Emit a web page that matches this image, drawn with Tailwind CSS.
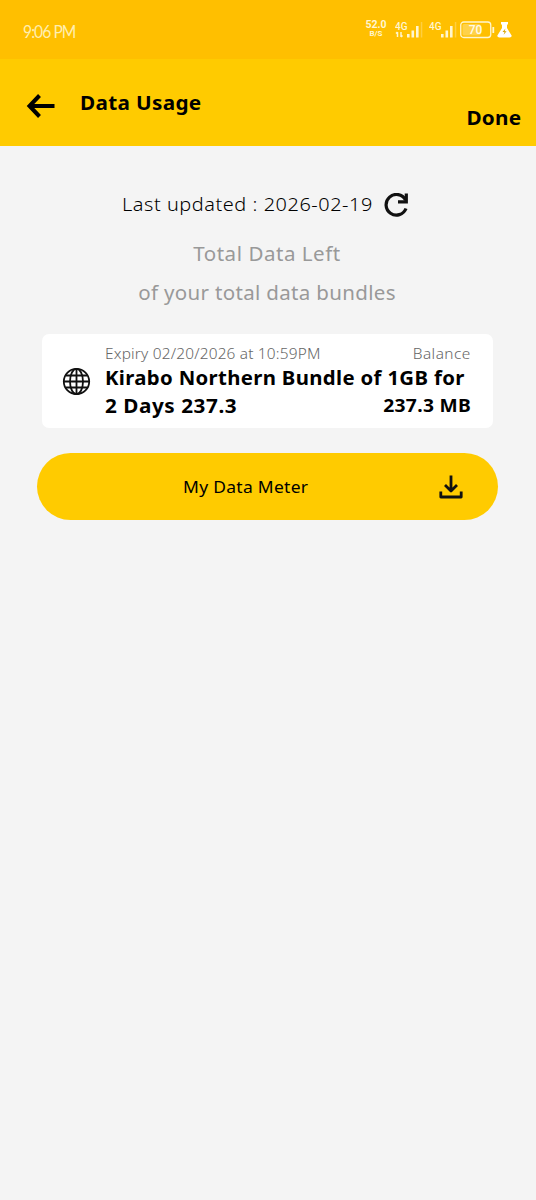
<!DOCTYPE html>
<html lang="en">
<head>
<meta charset="utf-8">
<title>Data Usage</title>
<script src="https://cdn.jsdelivr.net/npm/@tailwindcss/browser@4"></script>
</head>
<body class="w-[536px] h-[1200px] bg-[#f4f4f4] font-['Noto_Sans','Open_Sans',sans-serif] text-black whitespace-nowrap overflow-hidden">
<div class="h-[59px] bg-[#ffbf00] flex items-start justify-between pl-[23px] pr-[24px] text-[#fff6d0]">
  <div class="mt-[21px] leading-5 text-[18px] font-normal font-['Lato',sans-serif] tracking-[-1.1px] origin-left scale-x-[0.87] text-[#ffeeb0]">9:06 PM</div>
  <div class="flex items-start font-['Roboto',sans-serif] font-bold">
    <div class="mt-[19px] w-[22px] text-center mr-[8px]">
      <div class="text-[10.5px] leading-[11px]">52.0</div>
      <div class="text-[8px] leading-[7px]">B/S</div>
    </div>
    <svg class="mt-[20px] w-[30px] h-[19px] mr-[4px]" viewBox="0 0 30 19" fill="currentColor"><text x="0" y="9.500" font-size="10" font-weight="500">4G</text><path d="M2.500 12v5M1 13.500l1.500-1.500M6 12v5M6 17l1.500-1.500" fill="none" stroke="currentColor" stroke-width="1.500"/><path d="M12 14h2.600v3.500H12zM16.500 10.500h2.600v7h-2.600zM21 6h2.600v11.500H21z"/><path d="M25.800 2h1.500v15.500h-1.500z" opacity=".3"/></svg>
    <svg class="mt-[20px] w-[30px] h-[19px] mr-[1px]" viewBox="0 0 30 19" fill="currentColor"><text x="0" y="9.500" font-size="10" font-weight="500">4G</text><path d="M12 14h2.600v3.500H12zM16.500 10.500h2.600v7h-2.600zM21 6h2.600v11.500H21z"/><path d="M25.800 2h1.500v15.500h-1.500z" opacity=".3"/></svg>
    <svg class="mt-[21px] w-[35px] h-[18px] mr-[2px]" viewBox="0 0 35 18"><rect x=".75" y="1" width="30" height="15.500" rx="3" fill="none" stroke="currentColor" stroke-width="1.300"/><rect x="2.500" y="3" width="18" height="11.500" rx="1.500" fill="currentColor" opacity=".35"/><path d="M33.300 6v6" stroke="currentColor" stroke-width="1.800"/><text x="15.500" y="13" text-anchor="middle" font-size="12" font-weight="500" fill="#fffbe8">70</text></svg>
    <svg class="mt-[22px] w-[15px] h-[16px]" viewBox="0 0 15 16"><path d="M4 0h7v2.500h-1V6l4.600 7.500Q15 15.500 12.500 15.500h-10Q0 15.500 .4 13.500L5 6V2.500H4z" fill="white"/><path d="M8.500 6.500L5.500 10h2L6.600 12.700l3-3.500h-2z" fill="#d9a500"/></svg>
  </div>
</div>
<header class="h-[87px] bg-[#ffcb00] flex items-start text-[19px] leading-7 font-bold">
  <svg class="ml-[26px] mt-[35px] w-[29px] h-[24px]" viewBox="0 0 29 24" fill="none" stroke="black" stroke-width="4"><path d="M28.500 12H3M13.500 1.500L3.500 12l10 10.500"/></svg>
  <h1 class="ml-[25px] mt-[30px] tracking-[0.3px] origin-left scale-x-[1.09]">Data Usage</h1>
  <span class="ml-auto mr-[15px] mt-[45px] tracking-[0.2px] origin-right scale-x-[1.09]">Done</span>
</header>
<main class="flex flex-col pt-[44px]">
  <div class="flex items-center h-[28px] pl-[122px] text-[18px] font-light">
    <span class="tracking-[0.5px] w-[262px]"><span class="inline-block origin-left scale-x-[1.105]">Last updated : 2026-02-19</span></span>
    <svg class="mt-[2px] w-[25px] h-[24px]" viewBox="0 0 25 24" fill="none" stroke="#111" stroke-width="3.200"><path d="M22 15.500A10.300 10.300 0 1 1 21.500 7"/><path d="M22.300 .5v8.300H14"/></svg>
  </div>
  <div class="mt-[17px] pr-[2px] text-center text-[19px] leading-[39px] text-[#999]">
    <p class="tracking-[0.5px] scale-x-[1.08]">Total Data Left</p>
    <p class="tracking-[0.3px] scale-x-[1.08]">of your total data bundles</p>
  </div>
  <section class="ml-[42px] mt-[21px] w-[451px] h-[94px] bg-white rounded-[7px] flex pl-[20px] pr-[22px]">
    <svg class="mt-[33px] w-[29px] h-[29px] mr-[14px] shrink-0" viewBox="0 0 29 29" fill="none" stroke="#111" stroke-width="1.800"><circle cx="14.500" cy="14.500" r="12.700"/><ellipse cx="14.500" cy="14.500" rx="6.500" ry="12.700"/><path d="M14.500 2v25M2 14.500h25M4 8.500h21M4 20.500h21"/></svg>
    <div class="flex-1">
      <div class="flex justify-between mt-[10px] leading-5 text-[14px] font-light text-[#666]"><span class="tracking-[0.17px] origin-left scale-x-[1.1]">Expiry 02/20/2026 at 10:59PM</span><span class="tracking-[0.4px] origin-right scale-x-[1.1]">Balance</span></div>
      <div class="text-[19px] leading-7 font-bold tracking-[0.32px] origin-left scale-x-[1.07]">Kirabo Northern Bundle of 1GB for</div>
      <div class="flex justify-between text-[19px] leading-7 font-bold"><span class="tracking-[0.5px] origin-left scale-x-[1.09]">2 Days 237.3</span><span class="-mt-px text-[18px] tracking-[0.27px] origin-right scale-x-[1.07]">237.3 MB</span></div>
    </div>
  </section>
  <button class="ml-[37px] mt-[24.5px] w-[461px] h-[67.5px] rounded-full bg-[#ffcb00] flex items-center pt-[2px] pl-[146px] pr-[35px] justify-between text-[16.5px]">
    <span class="tracking-[0.26px] origin-left scale-x-[1.06]">My Data Meter</span>
    <svg class="w-[24px] h-[24px]" viewBox="0 0 24 24" fill="none" stroke="#111" stroke-width="2.800" stroke-linejoin="round"><path d="M12 .5v15M6 10l6 6 6-6M1.800 16.500V22h20.400v-5.500"/></svg>
  </button>
</main>
</body>
</html>
